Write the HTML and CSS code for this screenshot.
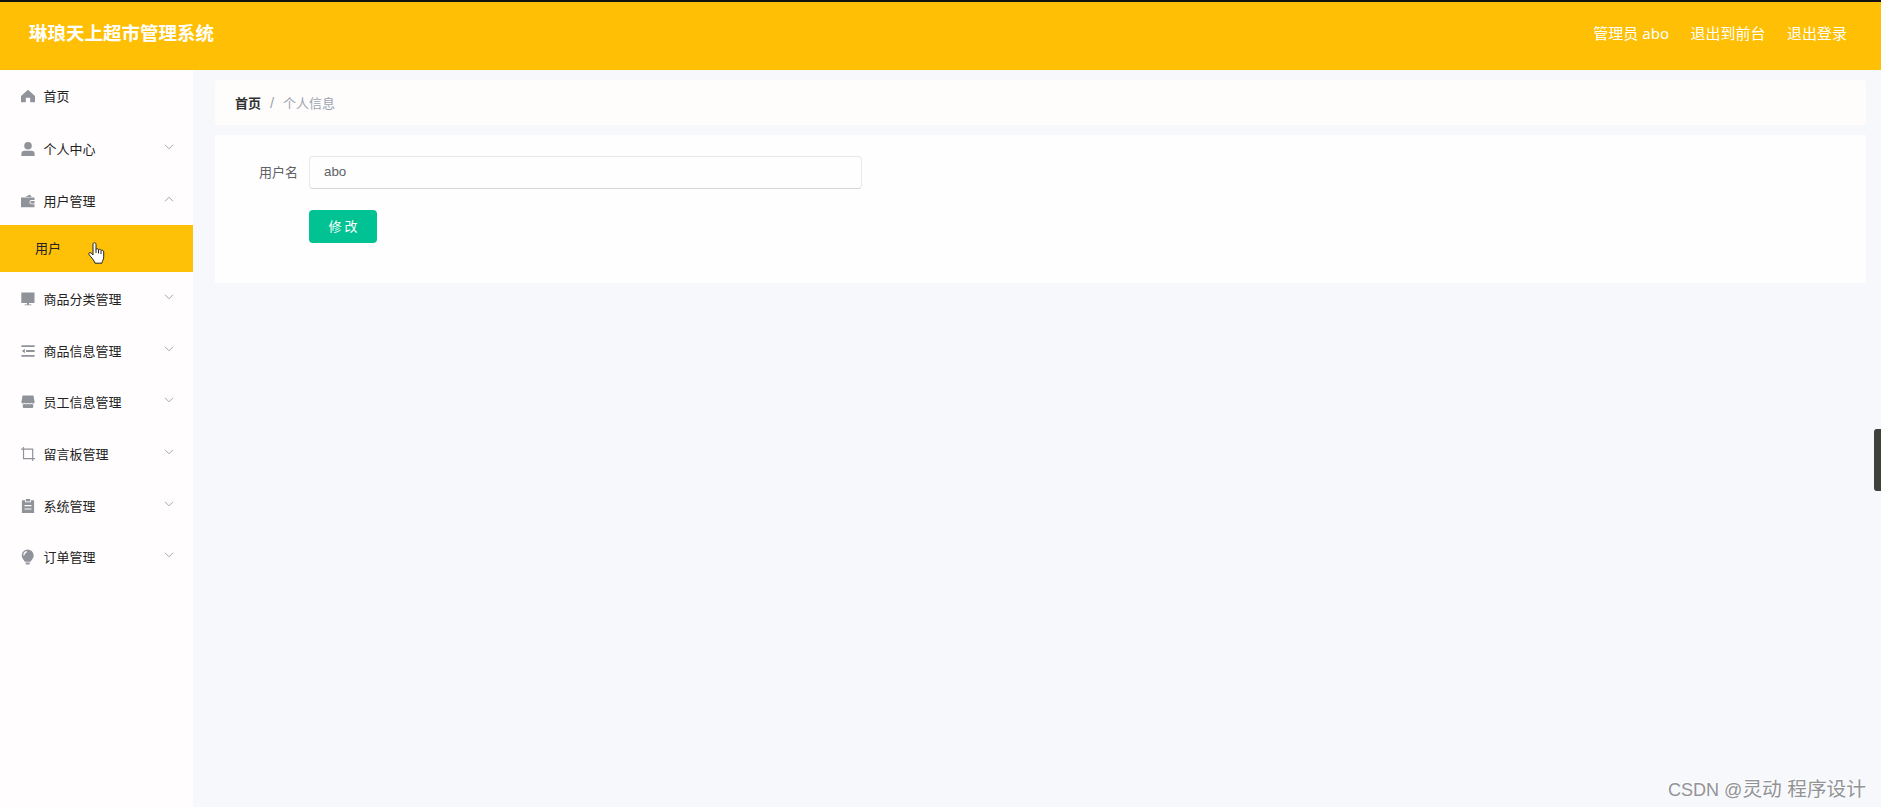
FILE: index.html
```html
<!DOCTYPE html>
<html lang="zh-CN">
<head>
<meta charset="utf-8">
<title>琳琅天上超市管理系统</title>
<link rel="stylesheet" href="styles.css">
</head>
<body>
<svg class="defs" width="0" height="0">
  <symbol id="down" viewBox="0 0 10 6"><path d="M1 .8l4 4 4-4" fill="none" stroke="currentColor"/></symbol>
  <symbol id="up" viewBox="0 0 10 6"><path d="M1 5.2l4-4 4 4" fill="none" stroke="currentColor"/></symbol>
</svg>
<header class="header">
  <h1 class="title">琳琅天上超市管理系统</h1>
  <nav class="links"><a class="admin">管理员 abo</a><a>退出到前台</a><a>退出登录</a></nav>
</header>
<div class="body">
  <aside class="side">
    <div class="item home"><svg class="icon" viewBox="0 0 14 14"><path d="M7 .8L14 7v6.200H9.200V8.800H4.800v4.400H0V7z"/></svg><span>首页</span></div>
    <div class="item"><svg class="icon" viewBox="0 0 14 14"><circle cx="7" cy="3.800" r="3.800"/><path d="M.4 14v-2.200Q.4 8.700 3.500 8.700h7q3.100 0 3.100 3.100V14z"/></svg><span>个人中心</span><svg class="arrow"><use href="#down"/></svg></div>
    <div class="item"><svg class="icon" viewBox="0 0 14 14"><path d="M4.500 2.900L8.800.5l2 2.400zM0 3.500h13.500v2.600h-3a2.100 2.100 0 000 4.200h3v2.900H0z"/><path d="M10.500 7h3v2.400h-3a1.200 1.200 0 010-2.400z"/></svg><span>用户管理</span><svg class="arrow"><use href="#up"/></svg></div>
    <div class="sub">用户
      <svg class="pointer" viewBox="0 0 17 22"><path d="M5 13V2.300C5 .3 8 .3 8 2.300v5c.5-1 2.300-.8 2.500.5.600-.9 2.300-.5 2.500.700.8-.7 2.700-.2 2.700 1.300v5c0 3-1.500 4-1.800 6.400H7C6.300 18.500 3.300 15.500 1.200 12.800 0 11 1.800 9.900 3.200 11.200z" fill="#fff" stroke="#222"/><path d="M8 7v4M10.500 8v3.500M13 9v3" stroke="#222" fill="none"/></svg>
    </div>
    <div class="item"><svg class="icon" viewBox="0 0 14 14"><path d="M.3.600h13.200v10.300H.3zM6 10.600h2v1.800h2.500v.8h-7v-.8H6z"/></svg><span>商品分类管理</span><svg class="arrow"><use href="#down"/></svg></div>
    <div class="item"><svg class="icon" viewBox="0 0 14 14"><path d="M.4 1.200h13.200v1.800H.4zM5 6.100h8.600v1.800H5zM.4 11h13.200v1.800H.4zM3.900 4.700v4.600L.8 7z"/></svg><span>商品信息管理</span><svg class="arrow"><use href="#down"/></svg></div>
    <div class="item"><svg class="icon" viewBox="0 0 14 14"><path d="M1.500.6h11L13.600 7q0 1.600-1.700 1.600-1 0-1.600-.8-.7.800-1.700.8T7 7.800q-.7.800-1.700.8t-1.700-.8q-.6.8-1.600.8Q.4 8.600.4 7zM1.800 9.300q1 .1 1.800-.5.800.6 1.700.5 1 .1 1.700-.5.700.6 1.700.5 1 .1 1.700-.5.800.6 1.800.5v2.800q0 1-1 1H2.800q-1 0-1-1z"/></svg><span>员工信息管理</span><svg class="arrow"><use href="#down"/></svg></div>
    <div class="item"><svg class="icon" viewBox="0 0 14 14"><path d="M0 2.200h11.700V14M2.500 0v11.700H14" fill="none" stroke="currentColor" stroke-width="1.200"/></svg><span>留言板管理</span><svg class="arrow"><use href="#down"/></svg></div>
    <div class="item"><svg class="icon" viewBox="0 0 14 14"><path fill-rule="evenodd" d="M.9 1.300H4v1.900h6V1.300h3.100V14H.9zM3.500 6v1.200h7V6zm0 3.400v1.200h7V9.400z"/><path d="M4.800 0h4.400v2.400H4.800z"/></svg><span>系统管理</span><svg class="arrow"><use href="#down"/></svg></div>
    <div class="item"><svg class="icon" viewBox="0 0 14 14"><path d="M6.700-.5a6 6 0 016 6c0 2.600-1.900 4.100-3.200 6.300H3.900C2.600 9.600.7 8.100.7 5.500a6 6 0 016-6zM4.300 12.400h4.800l-.9 2h-3z"/><path d="M2.800 5.400q.1-3 3-3.800" stroke="#fff" stroke-width="1.100" fill="none"/></svg><span>订单管理</span><svg class="arrow"><use href="#down"/></svg></div>
  </aside>
  <main class="main">
    <div class="crumb"><b>首页</b><span class="slash">/</span><span>个人信息</span></div>
    <section class="card">
      <div class="field"><label for="name">用户名</label><input id="name" class="input" value="abo"></div>
      <button class="save">修 改</button>
    </section>
  </main>
</div>
<div class="handle"></div>
<div class="mark"><span class="latin">CSDN @</span>灵动 程序设计</div>
</body>
</html>
```
FILE: styles.css
```css
* { box-sizing: border-box; }
body {
  margin: 0;
  height: 807px;
  overflow: hidden;
  display: flex;
  flex-direction: column;
  background: #f6f8fc;
  font: 13px "Noto Sans CJK SC", sans-serif;
}
.defs { position: absolute; }
.header {
  height: 70px;
  flex: none;
  border-top: 2px solid #111;
  background: #ffbf04;
  color: #fff;
  display: flex;
  justify-content: space-between;
  padding: 0 34px 0 29px;
}
.title { margin: 0; font-size: 18.500px; line-height: 60px; font-weight: 700; white-space: nowrap; }
.links { display: flex; gap: 21.500px; font: 15px/62px "Noto Sans", "Noto Sans CJK SC", sans-serif; }
.body { flex: 1; display: flex; min-height: 0; }
.side { width: 193px; flex: none; background: #fffdfe; color: #222; }
.item { height: 51.670px; padding: 2px 19px 0 21px; display: flex; align-items: center; }
.home { padding-top: 0; }
.item span { margin-left: 8.500px; flex: 1; white-space: nowrap; }
.icon { width: 14px; height: 14px; fill: currentColor; color: #909399; overflow: visible; position: relative; top: .500px; }
.arrow { width: 10px; height: 6px; color: #a2a5aa; position: relative; top: -1.500px; }
.sub { height: 46.600px; background: #ffc107; padding-left: 35px; line-height: 46px; position: relative; }
.pointer { position: absolute; left: 88px; top: 17px; width: 17px; height: 22px; }
.main { flex: 1; padding: 10px 15px 0 22px; }
.crumb { height: 45px; background: #fffdfc; border-radius: 4px; padding: 0 0 1px 20px; display: flex; align-items: center; color: #9da3b1; }
.crumb b { color: #303133; }
.slash { width: 22px; text-align: center; font: 15px "Liberation Sans", sans-serif; }
.card { margin-top: 10px; height: 148px; background: #fefeff; padding: 21px 0 0 44px; }
.field { display: flex; align-items: center; height: 33px; color: #606266; }
.field label { width: 50px; padding-bottom: 2px; }
.input { width: 553px; height: 33px; border: 1px solid #e7e8eb; border-bottom-color: #d6d7dc; border-radius: 4px; padding: 0 14px 2px; background: #fefeff; color: #606266; font: 13.330px "Liberation Sans", sans-serif; }
.save { display: block; margin: 21px 0 0 50px; width: 68px; height: 33px; padding: 0 0 2px; border: 0; border-radius: 4px; background: #00c292; color: #fff; font: 13px "Noto Sans CJK SC", sans-serif; }
.handle { position: absolute; right: 0; top: 429px; width: 7px; height: 62px; background: #3e403c; border-radius: 3px 0 0 3px; }
.mark { position: absolute; right: 15px; top: 775px; font: 19.700px/28px "Liberation Sans", "Noto Sans CJK SC", sans-serif; color: #929395; text-shadow: -1px -1px 0 #fff; white-space: nowrap; }
.latin { font-size: 18px; }
```
